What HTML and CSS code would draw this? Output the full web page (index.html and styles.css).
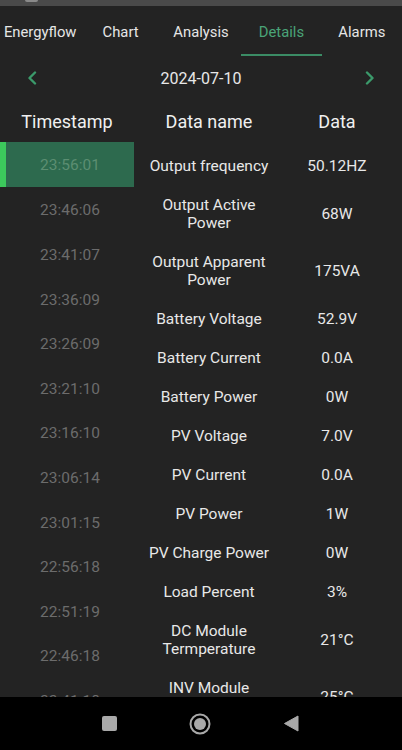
FILE: index.html
```html
<!DOCTYPE html>
<html lang="en">
<head>
    <meta charset="UTF-8">
    <meta name="viewport" content="width=device-width, initial-scale=1.0">
    <title>Details</title>
    <link rel="stylesheet" href="styles.css">
</head>
<body>
    <div class="pantalla">
        <div class="barra-estado"><span class="mancha"></span></div>

        <div class="pestanas">
            <div class="pestana">Energyflow</div>
            <div class="pestana">Chart</div>
            <div class="pestana">Analysis</div>
            <div class="pestana activa">Details</div>
            <div class="pestana">Alarms</div>
        </div>

        <div class="fecha">
            <svg class="flecha" width="10" height="14" viewBox="0 0 10 14">
                <path d="M8 1.5 L2.5 7 L8 12.5" fill="none" stroke="#3b9a6b" stroke-width="2.4" stroke-linecap="round" stroke-linejoin="round"/>
            </svg>
            <span>2024-07-10</span>
            <svg class="flecha" width="10" height="14" viewBox="0 0 10 14">
                <path d="M2 1.5 L7.5 7 L2 12.5" fill="none" stroke="#3b9a6b" stroke-width="2.4" stroke-linecap="round" stroke-linejoin="round"/>
            </svg>
        </div>

        <div class="cabecera">
            <div>Timestamp</div>
            <div>Data name</div>
            <div>Data</div>
        </div>

        <div class="cuerpo">
            <div class="horas">
                <div class="hora seleccionada">23:56:01</div>
                <div class="hora">23:46:06</div>
                <div class="hora">23:41:07</div>
                <div class="hora">23:36:09</div>
                <div class="hora">23:26:09</div>
                <div class="hora">23:21:10</div>
                <div class="hora">23:16:10</div>
                <div class="hora">23:06:14</div>
                <div class="hora">23:01:15</div>
                <div class="hora">22:56:18</div>
                <div class="hora">22:51:19</div>
                <div class="hora">22:46:18</div>
                <div class="hora">22:41:18</div>
            </div>
            <div class="datos">
                <div class="fila"><div class="nombre">Output frequency</div><div class="valor">50.12HZ</div></div>
                <div class="fila"><div class="nombre">Output Active<br>Power</div><div class="valor">68W</div></div>
                <div class="fila"><div class="nombre">Output Apparent<br>Power</div><div class="valor">175VA</div></div>
                <div class="fila"><div class="nombre">Battery Voltage</div><div class="valor">52.9V</div></div>
                <div class="fila"><div class="nombre">Battery Current</div><div class="valor">0.0A</div></div>
                <div class="fila"><div class="nombre">Battery Power</div><div class="valor">0W</div></div>
                <div class="fila"><div class="nombre">PV Voltage</div><div class="valor">7.0V</div></div>
                <div class="fila"><div class="nombre">PV Current</div><div class="valor">0.0A</div></div>
                <div class="fila"><div class="nombre">PV Power</div><div class="valor">1W</div></div>
                <div class="fila"><div class="nombre">PV Charge Power</div><div class="valor">0W</div></div>
                <div class="fila"><div class="nombre">Load Percent</div><div class="valor">3%</div></div>
                <div class="fila"><div class="nombre">DC Module<br>Termperature</div><div class="valor">21°C</div></div>
                <div class="fila"><div class="nombre">INV Module<br>Termperature</div><div class="valor">25°C</div></div>
            </div>
        </div>

        <div class="navegacion">
            <span class="cuadro"></span>
            <svg width="22" height="22" viewBox="0 0 22 22">
                <circle cx="11" cy="11" r="9.5" fill="none" stroke="#a9a9a9" stroke-width="2"/>
                <circle cx="11" cy="11" r="6" fill="#a9a9a9"/>
            </svg>
            <svg width="16" height="17" viewBox="0 0 16 17">
                <path d="M15 1 L15 16 L1.5 8.5 Z" fill="#a9a9a9" stroke="#a9a9a9" stroke-width="1" stroke-linejoin="round"/>
            </svg>
        </div>
    </div>
</body>
</html>
```

FILE: styles.css
```css
body{
    margin: 0;
    background-color: #232323;
    font-family: Roboto, "Liberation Sans", sans-serif;
    color: #e8e8e8;
}
.pantalla{
    width: 402px;
    height: 750px;
    display: flex;
    flex-direction: column;
    overflow: hidden;
}
.barra-estado{
    height: 6px;
    background-color: #4a4a4a;
    flex-shrink: 0;
    padding-left: 25px;
}
.mancha{
    display: block;
    width: 13px;
    height: 2px;
    background-color: #8a8a8a;
    border-radius: 0 0 2px 2px;
}
.pestanas{
    display: flex;
    height: 50px;
    flex-shrink: 0;
}
.pestana{
    flex: 1;
    display: flex;
    align-items: center;
    justify-content: center;
    font-size: 14.8px;
    color: #e6e6e6;
    box-sizing: border-box;
    padding-top: 1px;
}
.activa{
    color: #4aa478;
    border-bottom: 2.5px solid #3b8c65;
    padding-top: 3px;
}
.fecha{
    height: 44px;
    flex-shrink: 0;
    display: flex;
    align-items: center;
    justify-content: space-between;
    padding: 0 27px;
    font-size: 16px;
}
.cabecera{
    height: 42px;
    flex-shrink: 0;
    display: grid;
    grid-template-columns: 134px 150px 106px;
    align-items: center;
    text-align: center;
    font-size: 18px;
    color: #f0f0f0;
}
.cuerpo{
    flex: 1;
    display: flex;
    overflow: hidden;
}
.horas{
    width: 134px;
    flex-shrink: 0;
}
.hora{
    height: 44.6px;
    box-sizing: border-box;
    display: flex;
    align-items: center;
    justify-content: center;
    padding: 3px 0 0 6px;
    font-size: 15.5px;
    color: #6c6c6c;
}
.seleccionada{
    background-color: #2d6a4e;
    border-left: 6px solid #3cc95c;
    padding: 1px 0 0 0;
    color: #5c8e72;
}
.datos{
    padding-top: 4px;
}
.fila{
    display: grid;
    grid-template-columns: 150px 106px;
    align-items: center;
    text-align: center;
    padding: 10.5px 0;
    font-size: 15.5px;
    line-height: 18px;
}
.navegacion{
    height: 53px;
    flex-shrink: 0;
    background-color: #000;
    display: flex;
    align-items: center;
    justify-content: center;
    gap: 72px;
    padding-right: 2px;
}
.cuadro{
    width: 15px;
    height: 15px;
    border-radius: 2px;
    background-color: #a9a9a9;
}
```
